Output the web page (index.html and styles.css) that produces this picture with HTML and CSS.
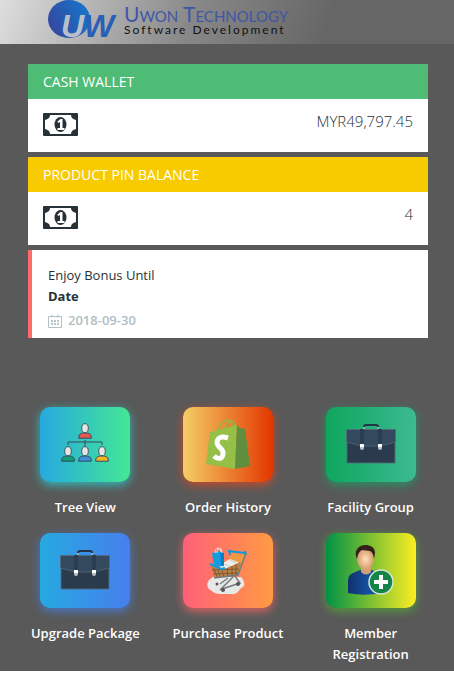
FILE: index.html
```html
<!DOCTYPE html>
<html lang="en">
<head>
    <meta charset="utf-8">
    <meta name="viewport" content="width=device-width, initial-scale=1">
    <title>Uwon Technology</title>
    <link rel="stylesheet" href="styles.css">
</head>
<body>
    <!-- shared icons -->
    <svg class="sprite" aria-hidden="true">
        <symbol id="money" viewBox="0 0 35 23">
            <rect width="35" height="23" rx="1" fill="#263238"/>
            <path d="M7 2h21c0 3 2 4 5 5v9c-3 1-5 2-5 5H7c0-3-2-4-5-5V7c3-1 5-2 5-5z" fill="#fff"/>
            <ellipse cx="17.5" cy="11.500" rx="6" ry="7.500" fill="#263238"/>
            <path d="M14.500 8.500 17.500 6h2v9h2v2h-7v-2h2.500V9l-2 1z" fill="#fff"/>
        </symbol>
        <symbol id="person" viewBox="0 0 14 16">
            <path d="M.7 15.200c0-4 1.500-4.700 4.800-5.200h3c3.300.5 4.800 1.200 4.800 5.200z" fill="currentColor" stroke="#34495e"/>
            <ellipse cx="7" cy="5.200" rx="3.300" ry="4.500" fill="#e6e6e6" stroke="#44545f"/>
        </symbol>
        <symbol id="briefcase" viewBox="0 0 50 40">
            <path d="M18 6V3q0-2 2-2h10q2 0 2 2v3" fill="none" stroke="#263545" stroke-width="2"/>
            <path d="M18 3v2M32 3v2" stroke="#c7d2d8" stroke-width="1.500"/>
            <path d="M1 17h48v22H1z" fill="#2b3b4e" stroke="#56697a" stroke-width=".8"/>
            <path d="M.5 5.500h49V18L34 22H16L.5 18z" fill="#34495e" stroke="#56697a" stroke-width=".8"/>
            <path d="M14 5h4v15h-4zM32 5h4v15h-4z" fill="#2a3c50"/>
            <path d="M14 20h4v4q0 2-2 2t-2-2zM32 20h4v4q0 2-2 2t-2-2z" fill="#b8bec2"/>
            <path d="M14 20h4v3h-4zM32 20h4v3h-4z" fill="#fff"/>
        </symbol>
    </svg>

    <header class="topbar">
        <a class="brand" href="#">
            <svg class="brand-mark" viewBox="0 0 70 44" aria-hidden="true">
                <defs>
                    <linearGradient id="globe" x1="0" y1=".6" x2="1" y2=".2">
                        <stop offset="0" stop-color="#3548a0"/>
                        <stop offset="1" stop-color="#1478cc"/>
                    </linearGradient>
                </defs>
                <ellipse cx="21" cy="19" rx="21" ry="19" fill="url(#globe)"/>
                <text class="mark-u" x="13" y="37">U</text>
                <text class="mark-w" x="36" y="37">W</text>
            </svg>
            <span class="brand-text">
                <span class="brand-name">Uwon Technology</span>
                <span class="brand-sub">Software Development</span>
            </span>
        </a>
    </header>

    <main class="page">
        <section class="cards">
            <div class="card">
                <h2 class="card-head green">CASH WALLET</h2>
                <div class="card-body">
                    <svg class="money"><use href="#money"/></svg>
                    <span class="amount">MYR49,797.45</span>
                </div>
            </div>
            <div class="card">
                <h2 class="card-head yellow">PRODUCT PIN BALANCE</h2>
                <div class="card-body">
                    <svg class="money"><use href="#money"/></svg>
                    <span class="amount">4</span>
                </div>
            </div>
            <div class="bonus">
                <p>Enjoy Bonus Until</p>
                <p class="bonus-title">Date</p>
                <p class="bonus-date">
                    <svg class="calendar" viewBox="0 0 14 14" aria-hidden="true">
                        <path d="M.5 2.500h13v11H.5zM4 .5v3M10 .5v3" fill="none" stroke="#b0bec5"/>
                        <path d="M3 7h8M3 10h8" stroke="#a3b4bc" stroke-width="1.500" stroke-dasharray="2 1"/>
                    </svg>
                    <time datetime="2018-09-30">2018-09-30</time>
                </p>
            </div>
        </section>

        <nav class="menu">
            <a class="item" href="#">
                <span class="tile tree">
                    <svg class="art" viewBox="0 0 90 75">
                        <path d="M45 33v6M28 38v-3h34v3" fill="none" stroke="#34495e"/>
                        <use href="#person" x="38" y="16" width="14" height="16" color="#e75a50"/>
                        <use href="#person" x="21" y="39" width="14" height="16" color="#159b76"/>
                        <use href="#person" x="38" y="39" width="14" height="16" color="#3e8fd4"/>
                        <use href="#person" x="55" y="39" width="14" height="16" color="#f5b324"/>
                    </svg>
                </span>
                <span class="label">Tree View</span>
            </a>
            <a class="item" href="#">
                <span class="tile order">
                    <svg class="art" viewBox="0 0 90 75">
                        <path d="M35 25q2-11 9-12 6 0 5 10M41 24q2-9 8-10 3 0 3 6" fill="none" stroke="#91b945" stroke-width="1.500"/>
                        <path d="M27 25 54 18l-2 44-29-5z" fill="#95bf47"/>
                        <path d="M54 18 57 21l5 1 5 37-15 3z" fill="#5e8e3e"/>
                        <path d="M45 31q-10-3-11 4c0 6 7 6 6 12-1 7-7 4-9 2" fill="none" stroke="#fff" stroke-width="5"/>
                    </svg>
                </span>
                <span class="label">Order History</span>
            </a>
            <a class="item" href="#">
                <span class="tile facility">
                    <svg class="art" viewBox="0 0 90 75"><use href="#briefcase" x="20" y="17" width="50" height="40"/></svg>
                </span>
                <span class="label">Facility Group</span>
            </a>
            <a class="item" href="#">
                <span class="tile upgrade">
                    <svg class="art" viewBox="0 0 90 75"><use href="#briefcase" x="20" y="17" width="50" height="40"/></svg>
                </span>
                <span class="label">Upgrade Package</span>
            </a>
            <a class="item" href="#">
                <span class="tile purchase">
                    <svg class="art" viewBox="0 0 90 75">
                        <path d="M30 44h28q4 4 3 9l-4 3q-3 6-9 5H36q-6-1-7-3-8-4-3-11z" fill="#e9e8e8"/>
                        <path d="M46 25 51 20 62 23 57 38z" fill="#ef9b43"/>
                        <path d="M36 32 47 26 55 29 57 35 40 40z" fill="#f1ede8"/>
                        <path d="M41 31l12 5M47 27l8 4" stroke="#d0ccc7"/>
                        <path d="M29 20 37 18 41 20 41 33 31 34z" fill="#159de0"/>
                        <path d="M37 19 41 20v12l-3 1z" fill="#087fc3"/>
                        <path d="M32 20q0-5 3-5t3 4M34 20q0-6 4-4l1 4" fill="none" stroke="#e6e1df"/>
                        <path d="M28 33 39 37 58 29 55 43 32 45z" fill="#b98147"/>
                        <path d="M31 35l3 9M35 36l2 8M39 37l2 7M44 35l1 9M49 33v10M53 31v11M29 37l27-1M30 41l25-1" fill="none" stroke="#76502f" stroke-width=".8"/>
                        <path d="M63 20 55 42 31 45M51 42l6 8-18 6M50 44 37 57M45 45l-8 6" fill="none" stroke="#777a7c" stroke-width="1.500"/>
                        <path d="M27 31l11 5 4-1M45 18l17 2M46 17l1 5M62 18l1 4" fill="none" stroke="#0b9bdb" stroke-width="2"/>
                        <g fill="#555"><circle cx="34" cy="51" r="1.500"/><circle cx="40" cy="57" r="2"/><circle cx="55" cy="51" r="2"/></g>
                    </svg>
                </span>
                <span class="label">Purchase Product</span>
            </a>
            <a class="item" href="#">
                <span class="tile member">
                    <svg class="art" viewBox="0 0 90 75">
                        <defs>
                            <radialGradient id="face"><stop stop-color="#ffe0bd"/><stop offset="1" stop-color="#d39b6b"/></radialGradient>
                            <linearGradient id="shirt"><stop stop-color="#10316c"/><stop offset=".6" stop-color="#1553a4"/><stop offset="1" stop-color="#0c397d"/></linearGradient>
                        </defs>
                        <path d="M22 60V48q0-6 5-8l7-3h12l8 4q5 3 5 9v9q-18 5-37 1z" fill="url(#shirt)"/>
                        <path d="M35 31h10v8q-5 5-10 0z" fill="#d2a077"/>
                        <path d="M31 18q8-6 17 0v8q-1 7-5 10-4 3-8-1-4-4-4-10z" fill="url(#face)"/>
                        <path d="M31 26q-2-5-1-8 3-7 11-6 8 1 8 8l-1 6q-1-7-4-8l-8-1q-4 2-5 9z" fill="#342019"/>
                        <circle cx="55" cy="49" r="12" fill="#148447" stroke="#d5e4d9" stroke-width="1.500"/>
                        <path d="M53 42h4v5h5v4h-5v5h-4v-5h-5v-4h5z" fill="#fff"/>
                    </svg>
                </span>
                <span class="label">Member Registration</span>
            </a>
        </nav>
    </main>
</body>
</html>
```

FILE: styles.css
```css
* {
    box-sizing: border-box;
    margin: 0;
    padding: 0;
}
body {
    font-family: "Open Sans", "Noto Sans", sans-serif;
    font-size: 13px;
    line-height: 21px;
    color: #263238;
    background: #fff;
}
a {
    color: inherit;
    text-decoration: none;
}
.sprite {
    display: none;
}

/* header */
.topbar {
    height: 44px;
    padding-left: 48px;
    background: linear-gradient(110deg, #dedede 0%, #888 42%, #666 72%);
}
.brand {
    display: inline-flex;
    gap: 6px;
}
.brand-mark {
    width: 70px;
    height: 44px;
    overflow: visible;
}
.mark-u,
.mark-w {
    font-family: "Liberation Sans", Arial, sans-serif;
    font-weight: bold;
    font-style: italic;
    font-size: 32px;
}
.mark-u {
    fill: #b9bfca;
}
.mark-w {
    fill: #285fb8;
}
.brand-text {
    display: flex;
    flex-direction: column;
    padding-top: 3px;
    white-space: nowrap;
}
.brand-name {
    font-family: Lato, sans-serif;
    font-variant: small-caps;
    font-size: 21px;
    line-height: 21px;
    color: #3f56a6;
}
.brand-sub {
    font-family: Lato, sans-serif;
    font-size: 12px;
    line-height: 12px;
    letter-spacing: 2px;
    color: #111;
}

/* page */
.page {
    padding: 20px 12px 6px 14px;
    background: #595959;
}
.cards {
    display: flex;
    flex-direction: column;
    gap: 5px;
    padding: 0 14px;
}
.card {
    background: #fff;
    border-radius: 2px 2px 0 0;
    overflow: hidden;
}
.card-head {
    padding: 7px 15px;
    font-size: 14px;
    line-height: 21px;
    font-weight: 400;
    color: #fff;
}
.green {
    background: #4fbc75;
}
.yellow {
    background: #f8ca00;
}
.card-body {
    display: flex;
    justify-content: space-between;
    height: 53px;
    padding: 12px 15px;
}
.money {
    width: 35px;
    height: 23px;
    margin-top: 2px;
}
.amount {
    font-size: 15px;
    font-weight: 300;
}
.bonus {
    padding: 15px 16px 7px;
    border-left: 4px solid #ff6b6b;
    background: #fff;
}
.bonus-title {
    font-weight: 700;
}
.bonus-date {
    display: flex;
    align-items: center;
    gap: 6px;
    padding-top: 3px;
    font-weight: 600;
    color: #b0bec5;
}
.calendar {
    width: 14px;
    height: 14px;
}

/* menu */
.menu {
    display: grid;
    grid-template-columns: repeat(3, 1fr);
    row-gap: 15px;
    padding-top: 69px;
}
.item {
    display: flex;
    flex-direction: column;
    align-items: center;
    gap: 15px;
    text-align: center;
}
.tile {
    width: 90px;
    height: 75px;
    border-radius: 10px;
}
.art {
    display: block;
    width: 90px;
    height: 75px;
}
.label {
    padding: 0 12px;
    font-weight: 600;
    color: #fff;
}
.tree {
    background: linear-gradient(to right, #26a9e0, #43e794);
    box-shadow: 0 3px 10px #31b9b9;
}
.order {
    background: linear-gradient(to right, #f4ce65, #e33600);
    box-shadow: 0 3px 10px #c94b27;
}
.facility {
    background: linear-gradient(to right, #0ea65d, #3cba92);
    box-shadow: 0 3px 10px #279265;
}
.upgrade {
    background: linear-gradient(to right, #26a9e0, #477eee);
    box-shadow: 0 3px 10px #4878c8;
}
.purchase {
    background: linear-gradient(to right, #ff6078, #ff9a44);
    box-shadow: 0 3px 10px #dc6260;
}
.member {
    background: linear-gradient(to right, #009245, #fcee21);
    box-shadow: 0 3px 10px #559b3c;
}
```
